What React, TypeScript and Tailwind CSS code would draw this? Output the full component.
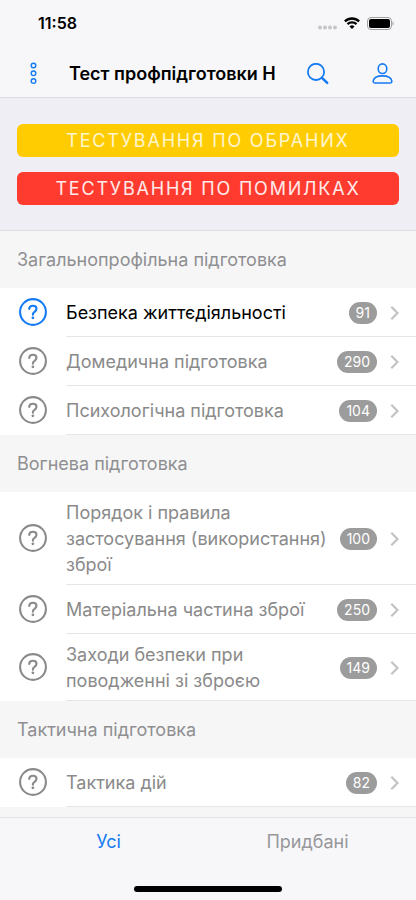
import React, { useState } from 'react';

type Topic = { title: string; count: number; open?: boolean };
type Section = { name: string; topics: Topic[] };

const sections: Section[] = [
  {
    name: 'Загальнопрофільна підготовка',
    topics: [
      { title: 'Безпека життєдіяльності', count: 91, open: true },
      { title: 'Домедична підготовка', count: 290 },
      { title: 'Психологічна підготовка', count: 104 },
    ],
  },
  {
    name: 'Вогнева підготовка',
    topics: [
      { title: 'Порядок і правила застосування (використання) зброї', count: 100 },
      { title: 'Матеріальна частина зброї', count: 250 },
      { title: 'Заходи безпеки при поводженні зі зброєю', count: 149 },
    ],
  },
  {
    name: 'Тактична підготовка',
    topics: [{ title: 'Тактика дій', count: 82 }],
  },
];

const QuestionIcon = () => (
  <svg className="size-7 shrink-0" viewBox="0 0 28 28" fill="none" stroke="currentColor" strokeWidth="2.1" aria-hidden="true">
    <circle cx="14" cy="14" r="12.9" />
    <path d="M10.2 10.900c.2-2 1.600-3.100 3.700-3.100s3.600 1.200 3.600 3c0 1.500-.8 2.200-1.900 3-1.200.8-1.700 1.300-1.700 2.400v.5" strokeLinecap="round" />
    <circle cx="13.900" cy="19.800" r="1.400" fill="currentColor" stroke="none" />
  </svg>
);

const StatusBar = () => (
  <div className="flex h-[50px] items-center justify-between pr-[22px] pb-[4px] pl-[38px]">
    <span className="text-base font-semibold">11:58</span>
    <div className="flex items-center gap-[7px]">
      <svg className="h-[13px] w-[19px]" viewBox="0 0 19 13" fill="#c5c5c8" aria-hidden="true">
        <circle cx="2" cy="10.500" r="1.900" />
        <circle cx="7" cy="10.500" r="1.900" />
        <circle cx="12" cy="10.500" r="1.900" />
        <circle cx="17" cy="10.500" r="1.900" />
      </svg>
      <svg className="h-[12px] w-[16px]" viewBox="0 0 16 12" fill="none" stroke="#000" strokeWidth="2.300" aria-hidden="true">
        <path d="M.9 4.400a10.200 10.200 0 0 1 14.200 0" />
        <path d="M3.500 7.200a6.500 6.500 0 0 1 9 0" />
        <path d="M8 12 5.500 9.400a3.600 3.600 0 0 1 5 0z" fill="#000" stroke="none" />
      </svg>
      <svg className="h-[13px] w-[27px]" viewBox="0 0 27 13" aria-hidden="true">
        <rect x=".5" y=".5" width="24" height="12" rx="3.500" fill="none" stroke="#a0a0a3" />
        <rect x="2" y="2" width="21" height="9" rx="2" fill="#000" />
        <path d="M25.500 4.500c1.600.7 1.600 3.300 0 4z" fill="#a0a0a3" />
      </svg>
    </div>
  </div>
);

const NavBar = () => (
  <div className="flex h-[47px] items-center pr-[23px] pl-[27px]">
    <button aria-label="Меню" className="text-[#147bf3]">
      <svg className="h-[24px] w-[12px]" viewBox="0 0 12 24" fill="none" stroke="currentColor" strokeWidth="1.400">
        <circle cx="6.500" cy="3.500" r="2.300" />
        <circle cx="6.500" cy="11.300" r="2.300" />
        <circle cx="6.500" cy="19.100" r="2.300" />
      </svg>
    </button>
    <h1 className="ml-[30px] flex-1 truncate text-lg font-semibold">Тест профпідготовки Н</h1>
    <button aria-label="Пошук" className="text-[#147bf3]">
      <svg className="size-[22px]" viewBox="0 0 22 22" fill="none" stroke="currentColor" strokeWidth="1.800">
        <circle cx="9" cy="8.900" r="8.100" />
        <path d="m15 14.800 5.200 5" strokeWidth="2.500" strokeLinecap="round" />
      </svg>
    </button>
    <button aria-label="Профіль" className="ml-[43px] text-[#147bf3]">
      <svg className="h-[22px] w-[21px]" viewBox="0 0 21 22" fill="none" stroke="currentColor" strokeWidth="1.600">
        <ellipse cx="10.500" cy="5.700" rx="4.300" ry="4.800" />
        <path d="M3.200 20C1.700 20 1 19.300 1.200 17.900c.6-3.100 4.300-5 9.300-5s8.700 1.900 9.300 5c.2 1.400-.5 2.100-2 2.100z" />
      </svg>
    </button>
  </div>
);

const TopicRow = ({ title, count, open }: Topic) => (
  <li>
    <button className={`flex w-full items-center gap-[19px] bg-white pl-[19px] text-left ${open ? 'text-black' : 'text-[#8a8a8a]'}`}>
      <span className={`pb-[2px] ${open ? 'text-[#147bf3]' : 'text-[#8a8a8a]'}`}>
        <QuestionIcon />
      </span>
      <span className="flex min-h-[49px] flex-1 items-center border-b border-[#e6e6e8] pt-[8px] pr-[17px] pb-[6px]">
        <span className="flex-1 text-lg leading-[26px]">{title}</span>
        <span className="ml-[10px] rounded-full bg-[#9c9c9c] px-[7px] text-sm leading-[22px] text-white">{count}</span>
        <svg className="ml-[13px] h-[16px] w-[9px]" viewBox="0 0 9 16" fill="none" stroke="#c2c2c5" strokeWidth="2.200" aria-hidden="true">
          <path d="m1.300 1.800 6.200 6.200-6.200 6.200" />
        </svg>
      </span>
    </button>
  </li>
);

const App: React.FC = () => {
  const [tab, setTab] = useState<'all' | 'bought'>('all');

  return (
    <div className="flex min-h-screen flex-col bg-[#f6f6f6] font-['Inter','Liberation_Sans',sans-serif] text-black">
      <header className="border-b border-[#dcdce0] bg-[#f7f7f9]">
        <StatusBar />
        <NavBar />
      </header>

      <main className="flex-1">
        <div className="flex flex-col gap-[15px] border-b border-[#dfdfe3] bg-[#efeef4] px-[17px] pt-[26px] pb-[25px]">
          <button className="h-[33px] rounded-md bg-[#ffcc02] text-lg tracking-widest text-white/80 uppercase">Тестування по обраних</button>
          <button className="h-[33px] rounded-md bg-[#ff3b30] text-lg tracking-widest text-white/90 uppercase">Тестування по помилках</button>
        </div>

        {sections.map((section) => (
          <section key={section.name}>
            <h2 className="flex h-[57px] items-center px-[17px] text-lg text-[#8f8f92]">{section.name}</h2>
            <ul>
              {section.topics.map((topic) => (
                <TopicRow key={topic.title} {...topic} />
              ))}
            </ul>
          </section>
        ))}
      </main>

      <footer className="sticky bottom-0 border-t border-[#e2e2e5] bg-[#f7f7f9]">
        <nav className="flex px-[9px]">
          <button
            onClick={() => setTab('all')}
            className={`h-[48px] flex-1 text-lg ${tab === 'all' ? 'text-[#147bf3]' : 'text-[#98989b]'}`}
          >
            Усі
          </button>
          <button
            onClick={() => setTab('bought')}
            className={`h-[48px] flex-1 text-lg ${tab === 'bought' ? 'text-[#147bf3]' : 'text-[#98989b]'}`}
          >
            Придбані
          </button>
        </nav>
        <div className="mx-auto mt-[20px] mb-[8px] h-[6px] w-[148px] rounded-full bg-black" />
      </footer>
    </div>
  );
};

export default App;
